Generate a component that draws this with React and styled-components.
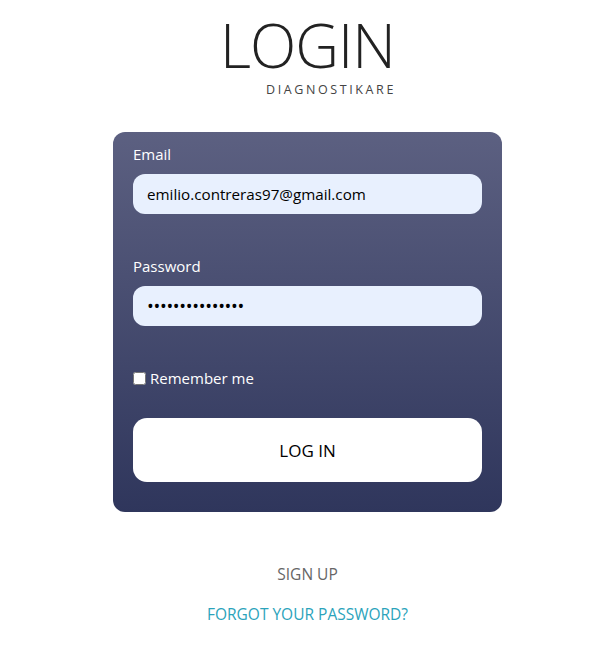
import React from 'react';
import styled, { createGlobalStyle } from 'styled-components';

const GlobalStyle = createGlobalStyle`
  html, body {
    margin: 0;
    padding: 0;
    background: #ffffff;
    font-family: "Open Sans", "Noto Sans", sans-serif;
  }
`;

const Page = styled.div`
  width: 605px;
  box-sizing: border-box;
  display: flex;
  flex-direction: column;
  align-items: center;
  padding: 11px 0 0 10px;
`;

const Header = styled.div`
  display: flex;
  flex-direction: column;
  align-items: flex-end;
  margin-bottom: 33px;
`;

const Title = styled.h1`
  margin: 0;
  font-size: 60.5px;
  font-weight: 300;
  line-height: 68px;
  color: #222;
  letter-spacing: -1px;
`;

const Subtitle = styled.span`
  font-size: 12.5px;
  font-weight: 400;
  letter-spacing: 2.6px;
  color: #444;
  line-height: 18px;
  margin: 2px -1px 0 0;
`;

const Card = styled.form`
  width: 389px;
  box-sizing: border-box;
  padding: 12px 20px 30px;
  border-radius: 12px;
  background: linear-gradient(180deg, #5c6081 0%, #2f365c 100%);
  display: flex;
  flex-direction: column;
`;

const Field = styled.div`
  display: flex;
  flex-direction: column;
  margin-bottom: ${p => p.$gap}px;
`;

const Label = styled.label`
  color: #fff;
  font-size: 15px;
  line-height: 20px;
  margin-bottom: 10px;
`;

const Input = styled.input`
  height: 40px;
  box-sizing: border-box;
  border: none;
  border-radius: 12px;
  background: #e8f0fe;
  padding: 0 14px;
  font-family: inherit;
  font-size: ${p => (p.type === 'password' ? '18px' : '15.2px')};
  letter-spacing: ${p => (p.type === 'password' ? '-0.3px' : '0')};
  color: #000;
  outline: none;
`;

const CheckRow = styled.label`
  display: flex;
  align-items: center;
  gap: 4px;
  color: #fff;
  font-size: 15px;
  line-height: 20px;
  margin-bottom: 30px;
`;

const Check = styled.input`
  margin: 0;
  width: 13px;
  height: 13px;
`;

const Submit = styled.button`
  height: 64px;
  border: none;
  border-radius: 14px;
  background: #fff;
  color: #000;
  font-family: inherit;
  font-size: 17px;
  cursor: pointer;
`;

const Links = styled.div`
  display: flex;
  flex-direction: column;
  align-items: center;
  gap: 20px;
  margin-top: 52px;
`;

const TextLink = styled.a`
  font-size: 15.5px;
  line-height: 20px;
  color: ${p => p.$color};
  text-decoration: none;
`;

export default function App() {
  return (
    <>
      <GlobalStyle />
      <Page>
        <Header>
          <Title>LOGIN</Title>
          <Subtitle>DIAGNOSTIKARE</Subtitle>
        </Header>
        <Card onSubmit={e => e.preventDefault()}>
          <Field $gap={42}>
            <Label>Email</Label>
            <Input type="text" defaultValue="emilio.contreras97@gmail.com" />
          </Field>
          <Field $gap={42}>
            <Label>Password</Label>
            <Input type="password" defaultValue="contrasena12345" />
          </Field>
          <CheckRow>
            <Check type="checkbox" />
            Remember me
          </CheckRow>
          <Submit type="submit">LOG IN</Submit>
        </Card>
        <Links>
          <TextLink href="#" $color="#666">SIGN UP</TextLink>
          <TextLink href="#" $color="#2ba3bb">FORGOT YOUR PASSWORD?</TextLink>
        </Links>
      </Page>
    </>
  );
}
